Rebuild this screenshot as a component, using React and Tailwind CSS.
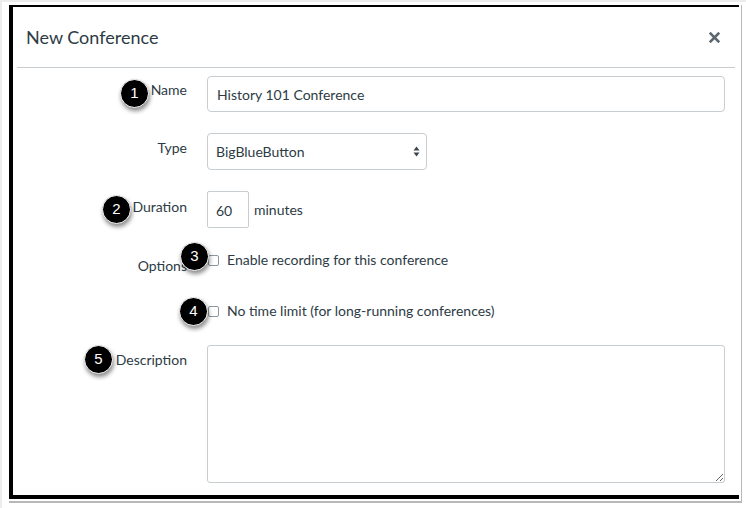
import React from 'react';

const font = { fontFamily: 'Lato, "Open Sans", sans-serif' };

function Badge({ n, className }) {
  return (
    <div
      className={`absolute w-[29px] h-[29px] rounded-full bg-black border border-white text-white text-[15px] flex items-center justify-center shadow-[1px_3px_4px_rgba(0,0,0,0.45)] ${className}`}
      style={{ fontFamily: '"Liberation Sans", Arial, sans-serif' }}
    >
      {n}
    </div>
  );
}

function Row({ label, labelClass = 'pt-[4px]', className = '', children }) {
  return (
    <div className={`flex ${className}`}>
      <div className={`w-[174px] text-right text-[14px] leading-[20px] text-[#2d3b45] ${labelClass}`}>{label}</div>
      <div className="ml-[20px] flex-1">{children}</div>
    </div>
  );
}

function Checkbox() {
  return <div className="w-[11px] h-[11px] border border-[#8b969e] rounded-[2px] bg-white mt-[5px] ml-[1px]" />;
}

export default function App() {
  return (
    <div className="relative w-[746px] h-[508px] bg-white border-l-2 border-t-2 border-[#ececec] pl-[7px] pt-[3px]" style={font}>
      <div className="w-[733px] h-[498px] border-r border-b-2 border-[#b8b8b8]">
        <div className="w-[730px] h-[494px] border-t-2 border-l-4 border-b-4 border-black bg-white flex flex-col">
          {/* header */}
          <div className="h-[61px] flex items-center justify-between pl-[9px] pr-[15px] border-b border-[#c7cdd1] mx-[4px]">
            <h2 className="text-[18px] text-[#2d3b45]">New Conference</h2>
            <svg width="11" height="11" viewBox="0 0 10 10">
              <path d="M1.5 1.5 L8.5 8.5 M8.5 1.5 L1.5 8.5" stroke="#5b6670" strokeWidth="2.4" strokeLinecap="square" />
            </svg>
          </div>

          {/* form */}
          <div className="pr-[10px]">
            <Row label="Name" className="mt-[8px]" labelClass="pt-[4px]">
              <div className="h-[36px] w-[518px] border border-[#c7cdd1] rounded-[4px] flex items-center px-[9px] text-[14px] text-[#2d3b45]">
                History 101 Conference
              </div>
            </Row>

            <Row label="Type" className="mt-[21px]" labelClass="pt-[5px]">
              <div className="h-[37px] w-[220px] border border-[#c7cdd1] rounded-[4px] flex items-center justify-between pl-[8px] pr-[6px] text-[14px] text-[#2d3b45]">
                <span>BigBlueButton</span>
                <svg width="7" height="11" viewBox="0 0 7 11">
                  <path d="M3.5 0.5 L6.5 4.5 L0.5 4.5 Z M3.5 10.5 L6.5 6.5 L0.5 6.5 Z" fill="#3b4650" />
                </svg>
              </div>
            </Row>

            <Row label="Duration" className="mt-[21px]" labelClass="pt-[6px]">
              <div className="flex items-center">
                <div className="h-[37px] w-[42px] border border-[#c7cdd1] rounded-[2px] flex items-center px-[8px] text-[14px] text-[#2d3b45] pt-[2px]">
                  60
                </div>
                <span className="ml-[5px] text-[14px] text-[#2d3b45]">minutes</span>
              </div>
            </Row>

            <Row label="Options" className="mt-[22px]" labelClass="pt-[6px]">
              <div className="flex items-start h-[20px]">
                <Checkbox />
                <span className="ml-[8px] text-[14px] leading-[20px] text-[#2d3b45]">Enable recording for this conference</span>
              </div>
            </Row>

            <Row label="" className="mt-[25px]" labelClass="">
              <div className="flex items-start h-[20px]">
                <Checkbox />
                <span className="ml-[8px] text-[14px] leading-[20px] text-[#2d3b45]">No time limit (for long-running conferences)</span>
              </div>
            </Row>

            <Row label="Description" className="mt-[24px]" labelClass="pt-[5px]">
              <textarea className="block h-[138px] w-[518px] border border-[#c7cdd1] rounded-[3px] resize-y outline-none" />
            </Row>
          </div>
        </div>
      </div>

      <Badge n="1" className="left-[118px] top-[77px]" />
      <Badge n="2" className="left-[100px] top-[193px]" />
      <Badge n="3" className="left-[178px] top-[240px]" />
      <Badge n="4" className="left-[177px] top-[295px]" />
      <Badge n="5" className="left-[82px] top-[343px]" />
    </div>
  );
}
